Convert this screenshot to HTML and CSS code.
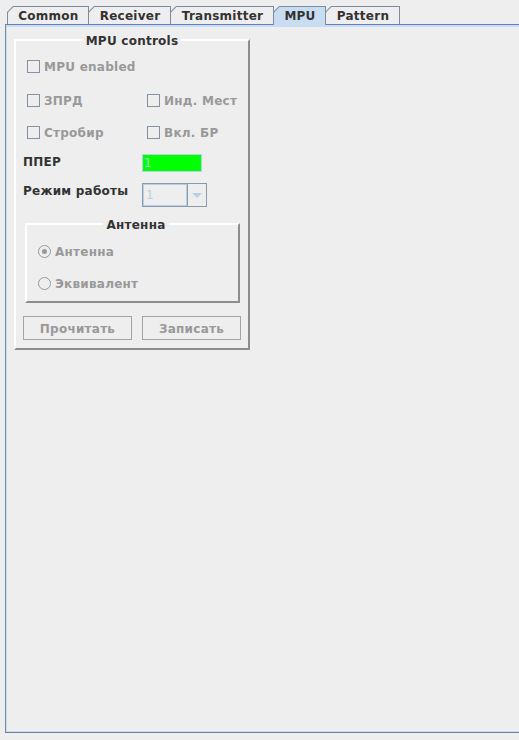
FILE: index.html
```html
<!DOCTYPE html>
<html>
<head>
<meta charset="utf-8">
<link rel="stylesheet" href="styles.css">
</head>
<body>
<div class="tabbar">
  <div class="tab w-common"><div class="tab-in">Common</div></div>
  <div class="tab w-receiver"><div class="tab-in">Receiver</div></div>
  <div class="tab w-trans"><div class="tab-in">Transmitter</div></div>
  <div class="tab w-mpu selected"><div class="tab-in">MPU</div></div>
  <div class="tab w-pattern"><div class="tab-in">Pattern</div></div>
</div>
<div class="panel">
  <fieldset class="group mpu">
    <legend>MPU controls</legend>
    <div class="row r1">
      <span class="check"><span class="box"></span><span class="dis">MPU enabled</span></span>
    </div>
    <div class="row grid-chk r2">
      <span class="check"><span class="box"></span><span class="dis">ЗПРД</span></span>
      <span class="check"><span class="box"></span><span class="dis">Инд. Мест</span></span>
    </div>
    <div class="row grid-chk r3">
      <span class="check"><span class="box"></span><span class="dis">Стробир</span></span>
      <span class="check"><span class="box"></span><span class="dis">Вкл. БР</span></span>
    </div>
    <div class="row grid-fld r4">
      <span class="lbl">ППЕР</span>
      <span class="field">1</span>
    </div>
    <div class="row grid-fld r5">
      <span class="lbl">Режим работы</span>
      <span class="combo"><span class="combo-text">1</span><span class="combo-btn"><span class="arrow"></span></span></span>
    </div>
    <fieldset class="group ant">
      <legend>Антенна</legend>
      <div class="row rr1">
        <span class="radio"><span class="circle on"></span><span class="dis">Антенна</span></span>
      </div>
      <div class="row rr2">
        <span class="radio"><span class="circle"></span><span class="dis">Эквивалент</span></span>
      </div>
    </fieldset>
    <div class="buttons">
      <span class="btn b1">Прочитать</span>
      <span class="btn b2">Записать</span>
    </div>
  </fieldset>
</div>
</body>
</html>
```
FILE: styles.css
```css
html, body {
  margin: 0;
  padding: 0;
  background: #eeeeee;
  overflow: hidden;
}
body {
  font-family: "DejaVu Sans", sans-serif;
  font-weight: bold;
  font-size: 12px;
  letter-spacing: 0.25px;
  color: #333333;
  width: 519px;
  height: 740px;
}
.tabbar {
  display: flex;
  align-items: flex-start;
  height: 18px;
  margin-top: 6px;
  padding-left: 7px;
}
.tab {
  position: relative;
  z-index: 1;
  box-sizing: border-box;
  height: 18px;
  padding: 1px 1px 0 1px;
  background: #7d8ca0;
  clip-path: polygon(0 6px, 6px 0, 100% 0, 100% 100%, 0 100%);
  margin-left: -1px;
}
.tab:first-child { margin-left: 0; }
.tab-in {
  height: 100%;
  background: #eeeeee;
  clip-path: polygon(0 5.4px, 5.4px 0, 100% 0, 100% 100%, 0 100%);
  text-align: center;
  line-height: 19px;
  padding-left: 1px;
}
.tab.selected { height: 19px; }
.tab.selected .tab-in { background: #c8ddf2; }
.w-common { width: 82px; }
.w-receiver { width: 83px; }
.w-trans { width: 104px; }
.w-mpu { width: 53px; }
.w-pattern { width: 75px; }

.panel {
  box-sizing: border-box;
  margin-left: 5px;
  width: 514px;
  height: 709px;
  border-top: 1px solid #6382bf;
  border-left: 1px solid #7a8aa0;
  border-bottom: 1px solid #6e7f96;
  box-shadow: inset 1px 0 0 #c8ddf2, inset 0 2px 0 #c8ddf2, inset 0 -1px 0 #c8ddf2;
  padding: 8px 0 0 8px;
}

.group {
  margin: 0;
  min-inline-size: 0;
  box-sizing: border-box;
  border-style: solid;
  border-width: 2px;
  border-color: #ffffff #8d8d8d #8d8d8d #ffffff;
}
.group legend {
  margin: 0 auto;
  padding: 0 3px;
  line-height: 16px;
  height: 14px;
  color: #333333;
}
.mpu {
  width: 236px;
  padding: 9px 7px 8px 7px;
}
.row {
  display: flex;
  align-items: center;
}
.r1 { height: 20px; }
.r2 { height: 20px; margin-top: 14px; }
.r3 { height: 20px; margin-top: 12px; }
.grid-chk {
  display: grid;
  grid-template-columns: 120px 1fr;
  align-items: center;
}
.grid-fld {
  display: grid;
  grid-template-columns: 119px 1fr;
  align-items: start;
}
.r4 { height: 18px; margin-top: 12px; }
.r5 { height: 24px; margin-top: 11px; }
.lbl {
  line-height: 16px;
  color: #333333;
}
.check, .radio {
  display: inline-flex;
  align-items: center;
  padding-left: 4px;
}
.dis {
  color: #999999;
  padding-top: 2px;
}
.box {
  box-sizing: border-box;
  width: 13px;
  height: 13px;
  border: 1px solid #8592a3;
  margin-right: 4px;
}
.field {
  box-sizing: border-box;
  width: 60px;
  height: 18px;
  background: #00ff00;
  border: 1px solid #b8cfe5;
  color: #b8cfe5;
  font-weight: normal;
  line-height: 17px;
  padding-left: 1px;
}
.combo {
  box-sizing: border-box;
  display: flex;
  width: 65px;
  height: 24px;
  border: 1px solid #8a99aa;
}
.combo-text {
  flex: 1;
  box-shadow: inset 0 0 0 1px #b8cfe5;
  color: #b8cfe5;
  font-weight: normal;
  line-height: 23px;
  padding-left: 3px;
}
.combo-btn {
  box-sizing: border-box;
  width: 19px;
  border-left: 1px solid #8a99aa;
  display: flex;
  align-items: center;
  justify-content: center;
}
.arrow {
  width: 0;
  height: 0;
  border-left: 5px solid transparent;
  border-right: 5px solid transparent;
  border-top: 5px solid #b8cfe5;
  margin-top: 1px;
}
.ant {
  margin: 10px 1px 0 2px;
  padding: 10px 0 8px 7px;
}
.rr1 { height: 20px; }
.rr2 { height: 20px; margin-top: 12px; }
.circle {
  box-sizing: border-box;
  width: 13px;
  height: 13px;
  border: 1px solid #999999;
  border-radius: 50%;
  margin-right: 4px;
  display: flex;
  align-items: center;
  justify-content: center;
}
.circle.on::after {
  content: "";
  width: 5px;
  height: 5px;
  border-radius: 50%;
  background: #999999;
}
.buttons {
  display: flex;
  gap: 10px;
  margin-top: 13px;
}
.btn {
  box-sizing: border-box;
  height: 24px;
  border: 1px solid #a3a3a3;
  color: #999999;
  text-align: center;
  line-height: 24px;
}
.b1 { width: 109px; }
.b2 { width: 99px; }
```
